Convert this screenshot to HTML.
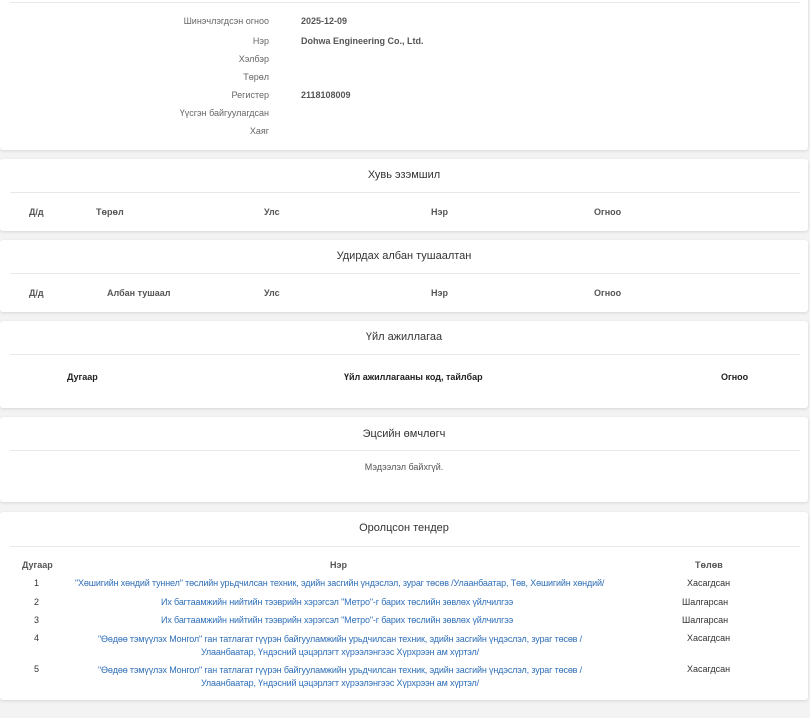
<!DOCTYPE html>
<html><head><meta charset="utf-8"><style>
body{margin:0;width:810px;height:718px;background:#f3f3f3;font-family:"Liberation Sans",sans-serif;color:#333;position:relative;overflow:hidden;font-size:9px}
.c{position:absolute;left:0;width:808px;background:#fff;box-shadow:0 1px 3px rgba(0,0,0,.12);border-radius:3px}
.t{position:absolute;white-space:nowrap}
.h{position:absolute;left:0;width:808px;text-align:center;font-size:11px;color:#333}
.ln{position:absolute;left:10px;width:790px;border-top:1px solid #e8e8e8}
.b{font-weight:bold;color:#555}
.r{text-align:right}
.a{color:#2f6fb8;letter-spacing:-0.15px}
.ctr{text-align:center}
</style></head><body>
<div class="c" style="top:-4px;height:154px">
<div class="ln" style="top:6px"></div>
</div>
<div class="t r" style="right:541px;top:16px;color:#666">Шинэчлэгдсэн огноо</div>
<div class="t r" style="right:541px;top:36px;color:#666">Нэр</div>
<div class="t r" style="right:541px;top:54px;color:#666">Хэлбэр</div>
<div class="t r" style="right:541px;top:72px;color:#666">Төрөл</div>
<div class="t r" style="right:541px;top:90px;color:#666">Регистер</div>
<div class="t r" style="right:541px;top:108px;color:#666">Үүсгэн байгуулагдсан</div>
<div class="t r" style="right:541px;top:126px;color:#666">Хаяг</div>
<div class="t b" style="left:301px;top:16px">2025-12-09</div>
<div class="t b" style="left:301px;top:36px">Dohwa Engineering Co., Ltd.</div>
<div class="t b" style="left:301px;top:90px">2118108009</div>

<div class="c" style="top:159px;height:72px">
<div class="h" style="top:10px">Хувь эзэмшил</div>
<div class="ln" style="top:33px"></div>
<div class="t b" style="left:29px;top:48px">Д/д</div>
<div class="t b" style="left:96px;top:48px">Төрөл</div>
<div class="t b" style="left:264px;top:48px">Улс</div>
<div class="t b" style="left:431px;top:48px">Нэр</div>
<div class="t b" style="left:594px;top:48px">Огноо</div>
</div>

<div class="c" style="top:240px;height:72px">
<div class="h" style="top:10px">Удирдах албан тушаалтан</div>
<div class="ln" style="top:33px"></div>
<div class="t b" style="left:29px;top:48px">Д/д</div>
<div class="t b" style="left:107px;top:48px">Албан тушаал</div>
<div class="t b" style="left:264px;top:48px">Улс</div>
<div class="t b" style="left:431px;top:48px">Нэр</div>
<div class="t b" style="left:594px;top:48px">Огноо</div>
</div>

<div class="c" style="top:321px;height:87px">
<div class="h" style="top:10px">Үйл ажиллагаа</div>
<div class="ln" style="top:33px"></div>
<div class="t" style="left:67px;top:51px;font-weight:bold;color:#222">Дугаар</div>
<div class="t" style="left:344px;top:51px;font-weight:bold;color:#222">Үйл ажиллагааны код, тайлбар</div>
<div class="t" style="left:721px;top:51px;font-weight:bold;color:#222">Огноо</div>
</div>

<div class="c" style="top:417px;height:85px">
<div class="h" style="top:11px">Эцсийн өмчлөгч</div>
<div class="ln" style="top:33px"></div>
<div class="h" style="top:45px;font-size:9px;color:#555">Мэдээлэл байхгүй.</div>
</div>

<div class="c" style="top:512px;height:188px">
<div class="h" style="top:10px">Оролцсон тендер</div>
<div class="ln" style="top:34px"></div>
<div class="t b" style="left:22px;top:48px">Дугаар</div>
<div class="t b" style="left:330px;top:48px">Нэр</div>
<div class="t b" style="left:695px;top:48px">Төлөв</div>
<div class="t" style="left:34px;top:66px">1</div>
<div class="t a" style="left:75px;top:66px">"Хөшигийн хөндий туннел" төслийн урьдчилсан техник, эдийн засгийн үндэслэл, зураг төсөв /Улаанбаатар, Төв, Хөшигийн хөндий/</div>
<div class="t" style="left:687px;top:66px">Хасагдсан</div>
<div class="t" style="left:34px;top:85px">2</div>
<div class="t a" style="left:161px;top:85px">Их багтаамжийн нийтийн тээврийн хэрэгсэл "Метро"-г барих төслийн зөвлөх үйлчилгээ</div>
<div class="t" style="left:682px;top:85px">Шалгарсан</div>
<div class="t" style="left:34px;top:103px">3</div>
<div class="t a" style="left:161px;top:103px">Их багтаамжийн нийтийн тээврийн хэрэгсэл "Метро"-г барих төслийн зөвлөх үйлчилгээ</div>
<div class="t" style="left:682px;top:103px">Шалгарсан</div>
<div class="t" style="left:34px;top:121px">4</div>
<div class="t a ctr" style="left:60px;width:560px;top:121px;line-height:13px">"Өөдөө тэмүүлэх Монгол" ган татлагат гүүрэн байгууламжийн урьдчилсан техник, эдийн засгийн үндэслэл, зураг төсөв /<br>Улаанбаатар, Үндэсний цэцэрлэгт хүрээлэнгээс Хүрхрээн ам хүртэл/</div>
<div class="t" style="left:687px;top:121px">Хасагдсан</div>
<div class="t" style="left:34px;top:152px">5</div>
<div class="t a ctr" style="left:60px;width:560px;top:152px;line-height:13px">"Өөдөө тэмүүлэх Монгол" ган татлагат гүүрэн байгууламжийн урьдчилсан техник, эдийн засгийн үндэслэл, зураг төсөв /<br>Улаанбаатар, Үндэсний цэцэрлэгт хүрээлэнгээс Хүрхрээн ам хүртэл/</div>
<div class="t" style="left:687px;top:152px">Хасагдсан</div>
</div>
</body></html>
